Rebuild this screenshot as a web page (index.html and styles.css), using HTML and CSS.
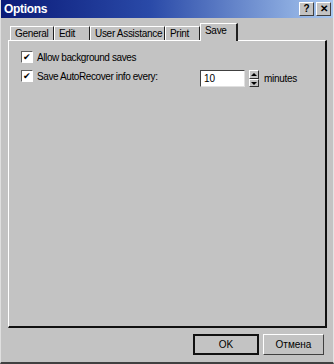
FILE: index.html
```html
<!DOCTYPE html>
<html lang="en">
<head>
  <meta charset="UTF-8">
  <meta name="viewport" content="width=device-width, initial-scale=1.0">
  <title>Options</title>
  <link rel="stylesheet" href="styles.css">
</head>
<body>
  <div class="window">
    <!-- Title bar -->
    <div class="titlebar">
      <span class="title">Options</span>
      <div class="title-buttons">
        <span class="tbtn">?</span>
        <span class="tbtn">&#x2715;</span>
      </div>
    </div>

    <!-- Tabs -->
    <div class="tabs">
      <span class="tab first">General</span>
      <span class="tab">Edit</span>
      <span class="tab">User Assistance</span>
      <span class="tab">Print</span>
      <span class="tab active">Save</span>
    </div>

    <!-- Save page -->
    <div class="panel">
      <div class="row">
        <label class="check">
          <span class="box">&#x2714;</span>
          <span>Allow background saves</span>
        </label>
      </div>
      <div class="row">
        <label class="check wide">
          <span class="box">&#x2714;</span>
          <span>Save AutoRecover info every:</span>
        </label>
        <span class="field">10</span>
        <span class="spin">
          <span class="arrow up"></span>
          <span class="arrow down"></span>
        </span>
        <span class="unit">minutes</span>
      </div>
    </div>

    <!-- Buttons -->
    <div class="footer">
      <button type="button" class="btn default">OK</button>
      <button type="button" class="btn">Отмена</button>
    </div>
  </div>
</body>
</html>
```

FILE: styles.css
```css
/* General Styling */
html {
  font-family: "Liberation Sans", Arial, sans-serif;
  font-size: 10px;
}
body {
  margin: 0;
  background: #c0c0c0;
}
.window {
  width: 334px;
  height: 364px;
  box-sizing: border-box;
  background: #c3c3c3;
  border-left: 1px solid #dfdfdf;
  border-right: 1px solid #e4e4e4;
  border-bottom: 2px solid #404040;
  display: flex;
  flex-direction: column;
  color: #000;
}

/* Title bar */
.titlebar {
  height: 18px;
  display: flex;
  align-items: center;
  justify-content: space-between;
  padding: 0 2px 0 3px;
  background: linear-gradient(90deg, #0a1a78, #2a4aa8 45%, #a8c8f0);
}
.title {
  color: #fff;
  font-weight: bold;
  font-size: 12px;
  letter-spacing: -0.3px;
}
.title-buttons {
  display: flex;
  gap: 2px;
}
.tbtn {
  width: 13px;
  height: 12px;
  background: #c3c3c3;
  border: 1px solid;
  border-color: #fff #404040 #404040 #fff;
  font-size: 10px;
  font-weight: bold;
  line-height: 12px;
  text-align: center;
}

/* Tabs */
.tabs {
  display: flex;
  align-items: flex-end;
  height: 18px;
  margin: 5px 0 -1px 9px;
  position: relative;
  z-index: 1;
}
.tab {
  height: 13px;
  margin-bottom: 1px;
  padding: 0 4px;
  line-height: 13px;
  border-top: 1px solid #fff;
  border-left: 1px solid #fff;
  border-right: 1px solid #202020;
  white-space: nowrap;
  letter-spacing: -0.3px;
}
.tab.first {
  width: 34px;
}
.tab:nth-child(2) {
  width: 26px;
}
.tab:nth-child(3) {
  width: 65px;
}
.tab:nth-child(4) {
  width: 25px;
}
.tab.active {
  height: 17px;
  margin-bottom: 0;
  width: 27px;
  line-height: 13px;
  background: #c3c3c3;
  border-right-width: 2px;
}

/* Panel */
.panel {
  width: 319px;
  height: 288px;
  box-sizing: border-box;
  margin-left: 7px;
  padding: 10px 0 0 12px;
  border-top: 1px solid #fff;
  border-left: 1px solid #fff;
  border-right: 2px solid #101010;
  border-bottom: 2px solid #101010;
  display: flex;
  flex-direction: column;
  gap: 5px;
}
.row {
  display: flex;
  align-items: flex-start;
  height: 13px;
}
.check {
  display: flex;
  align-items: center;
  gap: 4px;
  height: 12px;
  letter-spacing: -0.4px;
}
.check.wide {
  width: 179px;
  margin-top: 1px;
}
.box {
  width: 10px;
  height: 10px;
  background: #fff;
  border: 1px solid;
  border-color: #606060 #fff #fff #606060;
  font-size: 9px;
  line-height: 10px;
  text-align: center;
}
.field {
  width: 40px;
  height: 15px;
  margin-top: 1px;
  padding-left: 3px;
  background: #fff;
  border: 1px solid;
  border-color: #404040 #e0e0e0 #e0e0e0 #404040;
  line-height: 15px;
}
.spin {
  display: flex;
  flex-direction: column;
  width: 10px;
  height: 17px;
  margin: 1px 0 0 4px;
}
.arrow {
  flex: 1;
  background: #c3c3c3;
  border: 1px solid;
  border-color: #fff #303030 #303030 #fff;
  position: relative;
}
.arrow::after {
  content: "";
  position: absolute;
  left: 1px;
  top: 2px;
  border-left: 3px solid transparent;
  border-right: 3px solid transparent;
}
.arrow.up::after {
  border-bottom: 3px solid #000;
}
.arrow.down::after {
  border-top: 3px solid #000;
}
.unit {
  margin: 4px 0 0 5px;
  letter-spacing: -0.3px;
}

/* Buttons */
.footer {
  display: flex;
  justify-content: flex-end;
  gap: 4px;
  padding: 6px 9px 0 0;
}
.btn {
  width: 61px;
  height: 21px;
  font-family: inherit;
  font-size: 10px;
  background: #c3c3c3;
  border: 1px solid;
  border-color: #fff #404040 #404040 #fff;
  padding: 0;
}
.btn.default {
  width: 66px;
  border: 2px solid #101010;
}
```
